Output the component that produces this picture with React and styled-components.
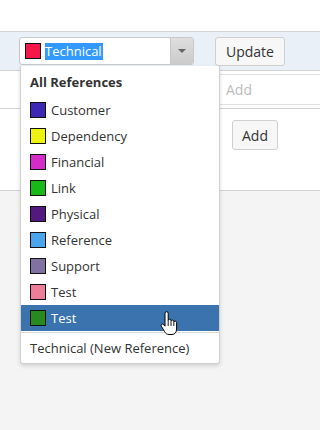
import React from "react";
import styled, { createGlobalStyle } from "styled-components";

const Global = createGlobalStyle`
  html, body { margin: 0; padding: 0; background: #f4f4f4; }
  body { font-family: "Open Sans", "Liberation Sans", sans-serif; color: #333; }
  * { box-sizing: border-box; }
`;

const Page = styled.div`
  position: relative;
  width: 100%;
  min-width: 251px;
  height: 430px;
  overflow: hidden;
  display: flex;
  flex-direction: column;
  background: #f4f4f4;
`;

const TopSpace = styled.div`
  height: 31px;
  background: #fff;
  flex: none;
`;

const Toolbar = styled.div`
  height: 40px;
  flex: none;
  background: #e9f0f8;
  border-top: 1px solid #d3d3d3;
  border-bottom: 1px solid #d3d3d3;
  display: flex;
  align-items: center;
  padding-left: 19px;
  gap: 21px;
`;

const Select = styled.div`
  width: 175px;
  height: 28px;
  flex: none;
  background: #fff;
  border: 1px solid #c8c8c8;
  border-radius: 3px;
  display: flex;
  align-items: center;
  padding-left: 5px;
  overflow: hidden;
`;

const Swatch = styled.span`
  width: 16px;
  height: 16px;
  flex: none;
  border: 1px solid #111;
  background: ${(p) => p.$c};
`;

const SelectedText = styled.span`
  margin-left: 4px;
  background: #3399ff;
  color: #fff;
  font-size: 13px;
  line-height: 17px;
  padding: 0 1px 0 0;
`;

const ArrowBox = styled.div`
  margin-left: auto;
  width: 23px;
  height: 100%;
  background: linear-gradient(#dedede, #cbcbcb);
  border-left: 1px solid #c8c8c8;
  display: flex;
  align-items: center;
  justify-content: center;
`;

const Caret = styled.span`
  width: 0;
  height: 0;
  border-left: 4px solid transparent;
  border-right: 4px solid transparent;
  border-top: 4px solid #666;
`;

const Button = styled.div`
  height: 29px;
  flex: none;
  padding: 0 10px;
  background: #f7f7f7;
  border: 1px solid #cfcfcf;
  border-radius: 3px;
  display: flex;
  align-items: center;
  font-size: 14px;
  color: #333;
  white-space: nowrap;
`;

const InputRow = styled.div`
  height: 38px;
  flex: none;
  background: #fff;
  border-bottom: 1px solid #d3d3d3;
  display: flex;
  align-items: center;
  padding-left: 215px;
`;

const Input = styled.div`
  height: 31px;
  flex: 1;
  border: 1px solid #e0e0e0;
  border-right: none;
  border-radius: 3px 0 0 3px;
  display: flex;
  align-items: center;
  padding-left: 10px;
  font-size: 14px;
  color: #bbb;
  white-space: nowrap;
`;

const Panel = styled.div`
  height: 82px;
  flex: none;
  background: #fff;
  border-bottom: 1px solid #d3d3d3;
  padding: 11px 0 0 232px;
  display: flex;
  align-items: flex-start;
`;

const SmallButton = styled(Button)`
  height: 30px;
  padding: 0 9px;
`;

const Dropdown = styled.div`
  position: absolute;
  left: 20px;
  top: 66px;
  width: 200px;
  background: #fff;
  border: 1px solid #d0d0d0;
  border-top: none;
  border-radius: 0 0 3px 3px;
  box-shadow: 0 2px 4px rgba(0, 0, 0, 0.15);
  display: flex;
  flex-direction: column;
`;

const Header = styled.div`
  height: 31px;
  display: flex;
  align-items: center;
  padding-left: 9px;
  font-weight: 700;
  font-size: 13px;
  color: #333;
`;

const Item = styled.div`
  height: 26px;
  display: flex;
  align-items: center;
  gap: 5px;
  padding-left: 9px;
  font-size: 13px;
  color: ${(p) => (p.$active ? "#fff" : "#333")};
  background: ${(p) => (p.$active ? "#3a73ad" : "transparent")};
  position: relative;
`;

const Separator = styled.div`
  height: 1px;
  margin-top: 1px;
  background: #dcdcdc;
`;

const Footer = styled.div`
  height: 30px;
  display: flex;
  align-items: center;
  padding-left: 9px;
  font-size: 13px;
  color: #333;
`;

const Cursor = styled.svg`
  position: absolute;
  left: 139px;
  top: 6px;
  width: 19px;
  height: 25px;
`;

const items = [
  ["Customer", "#3d28b5"],
  ["Dependency", "#eef20f"],
  ["Financial", "#d42cc8"],
  ["Link", "#19b819"],
  ["Physical", "#52197f"],
  ["Reference", "#4aa5ec"],
  ["Support", "#8171a0"],
  ["Test", "#ee7d9a"],
  ["Test", "#268a1e", true],
];

function HandCursor() {
  return (
    <Cursor viewBox="0 0 19 25">
      <path
        d="M5 2.3a1.6 1.6 0 0 1 3.2 0V9.6a1.4 1.4 0 0 1 2.8 0v0.9a1.4 1.4 0 0 1 2.8 0v1a1.4 1.4 0 0 1 2.8 0V18c0 3.2-1.7 5.5-4.6 5.5H9c-2.2 0-3.3-1-4.6-3.2L1.3 15.2a1.4 1.4 0 0 1 2.2-1.7L5 15.2Z"
        fill="#fff"
        stroke="#000"
        strokeWidth="1"
        strokeLinejoin="round"
      />
      <path d="M8.2 10v5M11 11v4M13.8 12v3" stroke="#000" strokeWidth="0.9" />
    </Cursor>
  );
}

export default function App() {
  return (
    <>
      <Global />
      <Page>
        <TopSpace />
        <Toolbar>
          <Select>
            <Swatch $c="#f5164a" />
            <SelectedText>Technical</SelectedText>
            <ArrowBox>
              <Caret />
            </ArrowBox>
          </Select>
          <Button>Update</Button>
        </Toolbar>
        <InputRow>
          <Input>Add</Input>
        </InputRow>
        <Panel>
          <SmallButton>Add</SmallButton>
        </Panel>
        <Dropdown>
          <Header>All References</Header>
          {items.map(([name, color, active], i) => (
            <Item key={i} $active={active}>
              <Swatch $c={color} />
              {name}
              {active && <HandCursor />}
            </Item>
          ))}
          <Separator />
          <Footer>Technical (New Reference)</Footer>
        </Dropdown>
      </Page>
    </>
  );
}
